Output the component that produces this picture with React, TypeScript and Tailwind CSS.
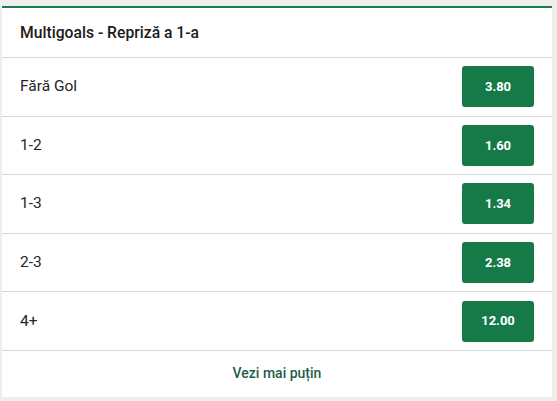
import React from 'react';

const rows = [
  { label: 'Fără Gol', odd: '3.80' },
  { label: '1-2', odd: '1.60' },
  { label: '1-3', odd: '1.34' },
  { label: '2-3', odd: '2.38' },
  { label: '4+', odd: '12.00' },
];

export default function App() {
  return (
    <div className="w-[557px] h-[401px] bg-[#eeeeee] pt-[6px] pl-[2px] pr-[5px] pb-[4px]" style={{ fontFamily: 'Roboto, "Noto Sans", sans-serif' }}>
      <div className="bg-white border-t-2 border-[#1a7a4a] h-[391px] flex flex-col">
        {/* Header */}
        <div className="h-[50px] flex items-center px-[18px] border-b border-[#d6d6d6]">
          <span className="text-[15.7px] font-medium text-[#1b1b1b]">Multigoals - Repriză a 1-a</span>
        </div>

        {/* Rows */}
        {rows.map((r) => (
          <div key={r.label} className="h-[58.6px] flex items-center justify-between pl-[18px] pr-[18px] border-b border-[#d6d6d6]">
            <span className="text-[15.5px] text-[#252525]">{r.label}</span>
            <button className="w-[72px] h-[41px] rounded-[3px] bg-[#167a48] text-white text-[13px] font-bold">
              {r.odd}
            </button>
          </div>
        ))}

        {/* Footer */}
        <div className="flex-1 flex items-center justify-center">
          <span className="text-[14px] font-medium text-[#1d5e4c]">Vezi mai puțin</span>
        </div>
      </div>
    </div>
  );
}
